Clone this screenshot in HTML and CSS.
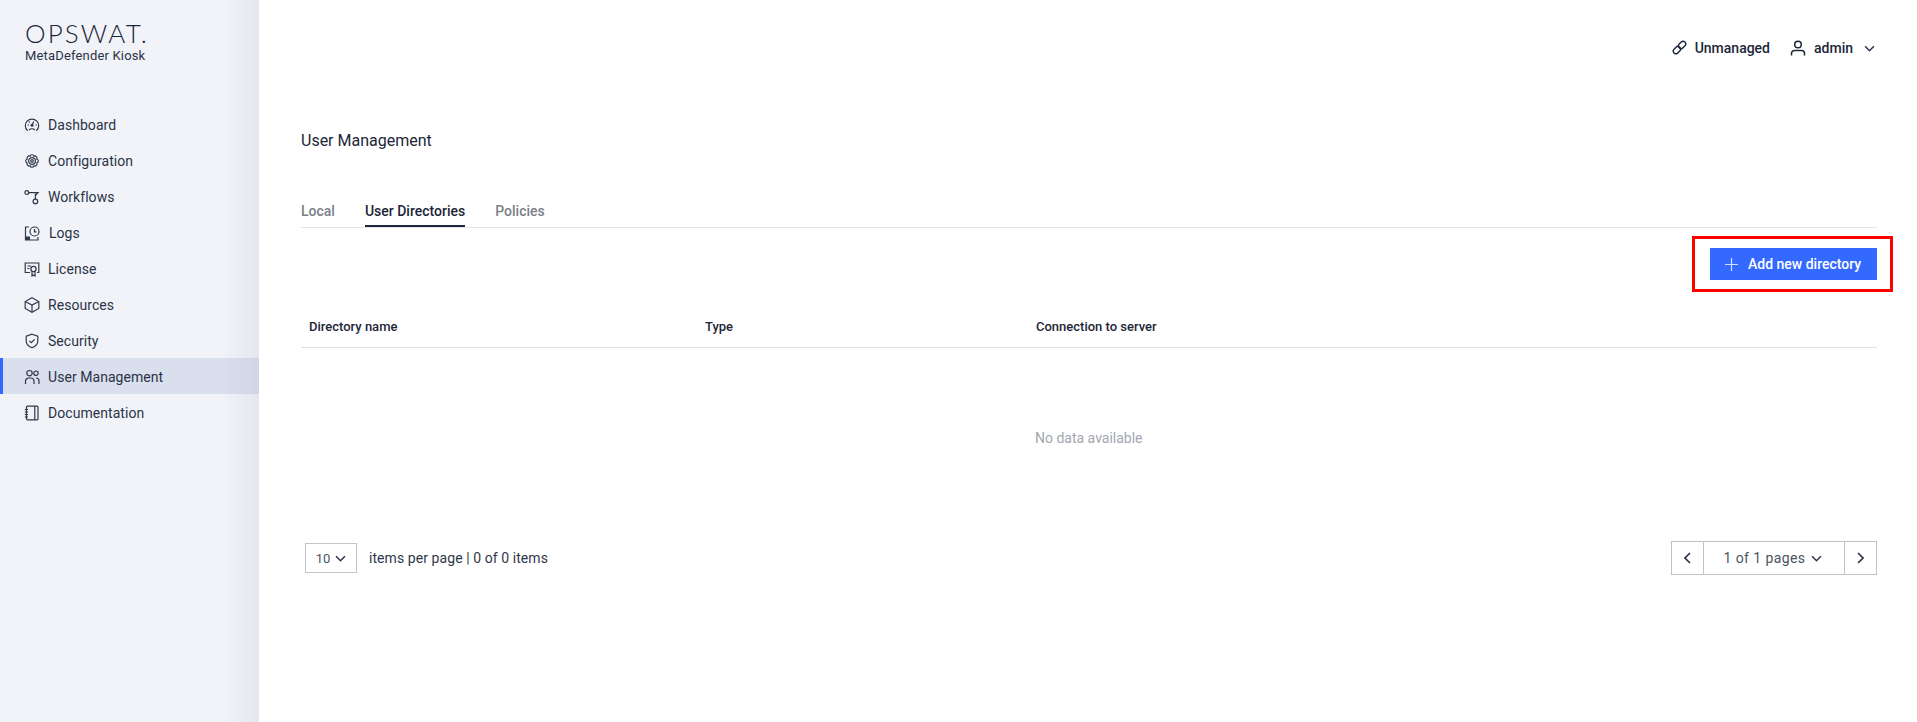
FILE: index.html
```html
<!DOCTYPE html>
<html lang="en">
<head>
<meta charset="utf-8">
<title>User Management</title>
<link rel="stylesheet" href="styles.css">
</head>
<body>
<div class="app">
  <aside class="sidebar">
    <div class="logo">
      <div class="logo-word">OPSWAT.</div>
      <div class="logo-sub">MetaDefender Kiosk</div>
    </div>
    <nav class="nav">
      <a class="nav-item"><svg class="nav-icon" viewBox="0 0 16 16"><path d="M3.600 13.800A6.700 6.700 0 1 1 12.400 13.800"/><path d="M5 13a4.300 4.300 0 0 1 6 0"/><circle class="solid" cx="8" cy="8.300" r="1.500"/><path d="M8.400 7.500l1.400-3M3.500 8H5M11.500 8H13M4.800 4.600l.9.900"/></svg><span>Dashboard</span></a>
      <a class="nav-item"><svg class="nav-icon" viewBox="0 0 16 16"><path d="M12.800 6A2.100 2.100 0 0 1 12.800 10A2.100 2.100 0 0 1 10 12.800A2.100 2.100 0 0 1 6 12.800A2.100 2.100 0 0 1 3.200 10A2.100 2.100 0 0 1 3.200 6A2.100 2.100 0 0 1 6 3.200A2.100 2.100 0 0 1 10 3.200A2.100 2.100 0 0 1 12.800 6z"/><circle cx="8" cy="8" r="3.400"/><circle cx="8" cy="8" r="1.300"/></svg><span>Configuration</span></a>
      <a class="nav-item"><svg class="nav-icon" viewBox="0 0 16 16"><circle cx="2.800" cy="3.600" r="1.900"/><path d="M4.800 3.600H14l-2.600 3"/><path d="M11.400 4.500V10"/><circle cx="11.400" cy="12.400" r="2.300"/></svg><span>Workflows</span></a>
      <a class="nav-item nav-logs"><svg class="nav-icon" viewBox="0 0 16 16"><path d="M5 2H1.500v13H14V12"/><rect class="solid" x="1.500" y="11.500" width="4.500" height="3.500"/><circle cx="10.500" cy="6.500" r="4.500"/><path d="M10.500 4v2.800h2"/></svg><span>Logs</span></a>
      <a class="nav-item"><svg class="nav-icon" viewBox="0 0 16 16"><path d="M6 11.500H1.200V2h13.600v9.500H13"/><path d="M3.500 5H7M3.500 7.500H5.500"/><circle cx="9.500" cy="8" r="2.600"/><path d="M8 10.500V15l1.500-1 1.500 1v-4.500"/></svg><span>License</span></a>
      <a class="nav-item"><svg class="nav-icon" viewBox="0 0 16 16"><path d="M8 .8l6.800 3.700v7L8 15.200l-6.800-3.700v-7z"/><path d="M1.200 4.500L8 8l6.800-3.500M8 8v7.200"/></svg><span>Resources</span></a>
      <a class="nav-item"><svg class="nav-icon" viewBox="0 0 16 16"><path d="M8 1.200l5.800 1.900v5.200c0 3-2.600 5.200-5.800 6.500-3.200-1.300-5.800-3.500-5.800-6.500V3.100z"/><path d="M5.400 7.800l1.900 1.900 3.300-3.300"/></svg><span>Security</span></a>
      <a class="nav-item is-active"><svg class="nav-icon" viewBox="0 0 16 16"><circle cx="5.500" cy="4.200" r="2.700"/><circle cx="12" cy="4.200" r="2.200"/><path d="M1.500 15v-2.500a3.500 3.500 0 0 1 3.500-3.500h1.500a3.500 3.500 0 0 1 3.500 3.500V15"/><path d="M12 9a3 3 0 0 1 3 3v3"/></svg><span>User Management</span></a>
      <a class="nav-item"><svg class="nav-icon" viewBox="0 0 16 16"><rect x="2.500" y="1.200" width="11.500" height="13.600" rx="1"/><path d="M10.800 1.200v13.600M.8 4.500h3.200M.8 7h3.200M.8 9.500h3.200M.8 12h3.200"/></svg><span>Documentation</span></a>
    </nav>
  </aside>
  <main class="main">
    <header class="topbar">
      <span class="top-item"><svg class="top-link" viewBox="0 0 16 16"><g transform="rotate(-45 8 8)"><rect x="-.2" y="5.200" width="8.600" height="5.600" rx="2.800"/><rect x="7.600" y="5.200" width="8.600" height="5.600" rx="2.800"/></g></svg><span class="top-text">Unmanaged</span></span>
      <span class="top-item top-user"><svg class="top-person" viewBox="0 0 16 16"><circle cx="8" cy="4.500" r="3.300"/><path d="M1.500 15.500v-2a3 3 0 0 1 3-3h7a3 3 0 0 1 3 3v2"/></svg><span class="top-text">admin</span><svg class="chev top-chev" viewBox="0 0 10 6"><path d="M1 1l4 4 4-4"/></svg></span>
    </header>
    <h1 class="title">User Management</h1>
    <div class="tabs">
      <span class="tab">Local</span>
      <span class="tab is-current">User Directories</span>
      <span class="tab">Policies</span>
    </div>
    <div class="actions">
      <button class="add-btn"><svg class="plus" viewBox="0 0 14 14"><path d="M7 0v14M0 7h14"/></svg>Add new directory<span class="highlight"></span></button>
    </div>
    <div class="table-head">
      <span class="col col-name">Directory name</span>
      <span class="col col-type">Type</span>
      <span class="col">Connection to server</span>
    </div>
    <div class="empty">No data available</div>
    <footer class="pager-row">
      <div class="pager-left">
        <span class="size-select">10<svg class="chev" viewBox="0 0 10 6"><path d="M1 1l4 4 4-4"/></svg></span>
        <span class="pager-info">items per page | 0 of 0 items</span>
      </div>
      <div class="pager">
        <span class="pager-btn"><svg class="arrow" viewBox="0 0 7 12"><path d="M6 1L1 6l5 5"/></svg></span>
        <span class="pager-mid">1 of 1 pages<svg class="chev" viewBox="0 0 10 6"><path d="M1 1l4 4 4-4"/></svg></span>
        <span class="pager-btn"><svg class="arrow" viewBox="0 0 7 12"><path d="M1 1l5 5-5 5"/></svg></span>
      </div>
    </footer>
  </main>
</div>
</body>
</html>
```
FILE: styles.css
```css
* { box-sizing: border-box; }
html, body { margin: 0; height: 100%; background: #fff; overflow: hidden; }
body { font-family: Roboto, "Liberation Sans", sans-serif; font-size: 14px; color: #1d2638; }
.app { display: flex; height: 722px; }

.sidebar {
  width: 259px; flex: none; background: #f1f3f9;
  background-image: linear-gradient(to right, rgba(20,30,60,0) 222px, rgba(20,30,60,.06) 259px);
}
.logo { padding: 20px 0 0 25px; height: 106px; }
.logo-word { font-family: Lato, sans-serif; font-weight: 300; font-size: 26px; line-height: 27px; letter-spacing: 2.1px; color: #1d2638; white-space: nowrap; }
.logo-sub { font-size: 13px; line-height: 16px; margin-top: 1px; letter-spacing: .17px; color: #2a3346; }
.nav { display: flex; flex-direction: column; }
.nav-item { display: flex; align-items: center; height: 36px; padding: 2px 0 0 24px; gap: 8px; color: #2a3346; letter-spacing: .05px; }
.nav-logs { gap: 9px; }
.nav-item.is-active { background: #dadfed; background-image: linear-gradient(to right, rgba(20,30,60,0) 222px, rgba(20,30,60,.05) 259px); box-shadow: inset 3px 0 0 #3369ff; }
.nav-icon { width: 16px; height: 16px; flex: none; fill: none; stroke: #2f3849; stroke-width: 1.200; }
.nav-icon .solid { fill: #2f3849; stroke: none; }

.main { flex: 1; padding: 0 40px 0 42px; min-width: 0; }
.topbar { display: flex; justify-content: flex-end; align-items: center; height: 96px; padding-bottom: 1px; font-weight: 500; font-size: 14px; }
.top-item { display: flex; align-items: center; }
.top-text { color: #1d2638; }
.top-link { width: 15px; height: 15px; margin-right: 8px; fill: none; stroke: #1d2638; stroke-width: 1.500; }
.top-user { margin-left: 20px; }
.top-person { width: 16px; height: 16px; margin-right: 8px; fill: none; stroke: #1d2638; stroke-width: 1.500; }
.top-chev { margin: 1px 2px 0 11px; }
.chev { width: 11px; height: 7px; fill: none; stroke: #2a3346; stroke-width: 1.400; flex: none; }

.title { margin: 0; font-size: 16px; font-weight: 400; line-height: 24px; padding-top: 33px; height: 57px; color: #1d2638; }
.tabs { display: flex; gap: 30px; margin-top: 46px; height: 29px; border-bottom: 1px solid #e5e6ea; align-items: stretch; }
.tab { color: #7b7f88; font-weight: 500; line-height: 24px; }
.tab.is-current { color: #1d2638; border-bottom: 2px solid #1d2638; }

.actions { display: flex; justify-content: flex-end; padding-top: 20px; height: 85px; }
.add-btn { position: relative; display: flex; align-items: center; height: 32px; width: 167px; padding: 0 0 0 15px; background: #3369ff; border: 0; color: #fff; font: 500 14px/32px Roboto, sans-serif; white-space: nowrap; }
.plus { width: 13px; height: 13px; margin-right: 10px; fill: none; stroke: #d5dfff; stroke-width: 1.300; flex: none; }
.highlight { position: absolute; left: -18px; top: -12px; width: 201px; height: 56px; border: 3px solid #ff0000; }

.table-head { display: flex; height: 35px; font-size: 13px; font-weight: 500; line-height: 28px; border-bottom: 1px solid #dfe0e4; padding-left: 8px; color: #1d2638; }
.col-name { width: 396px; }
.col-type { width: 331px; }
.empty { height: 180px; padding-top: 79px; padding-left: 734px; line-height: 22px; color: #a3a7b0; }

.pager-row { display: flex; justify-content: space-between; align-items: center; height: 56px; padding-left: 4px; padding-bottom: 2px; margin-top: 3px; }
.pager-left { display: flex; align-items: center; }
.size-select { display: flex; align-items: center; justify-content: center; gap: 5px; width: 52px; height: 30px; border: 1px solid #c0c3c9; font-size: 13px; color: #4c5361; }
.pager-info { margin-left: 12px; color: #2f3849; letter-spacing: .07px; }
.pager { display: flex; height: 34px; border: 1px solid #bfc2c9; }
.pager-btn { display: flex; align-items: center; justify-content: center; width: 32px; }
.pager-btn:first-child { border-right: 1px solid #bfc2c9; }
.pager-btn:last-child { border-left: 1px solid #bfc2c9; }
.pager-mid { display: flex; align-items: center; justify-content: center; gap: 6px; width: 140px; padding-right: 2px; color: #4c5361; letter-spacing: .4px; }
.arrow { width: 7px; height: 12px; fill: none; stroke: #2a3346; stroke-width: 1.600; }
```
